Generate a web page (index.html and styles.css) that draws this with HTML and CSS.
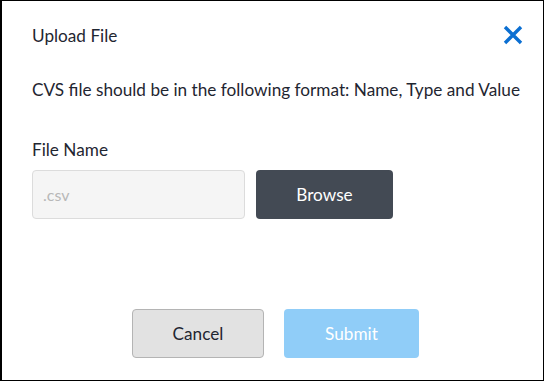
FILE: index.html
```html
<!DOCTYPE html>
<html>
<head>
<meta charset="utf-8">
<link rel="stylesheet" href="styles.css">
</head>
<body>
<div class="dialog">
  <div class="header">
    <h1 class="title">Upload File</h1>
    <button class="close" aria-label="Close">
      <svg width="20" height="20" viewBox="0 0 20 20"><path d="M2 2 L18 18 M18 2 L2 18" stroke="#0b6fd2" stroke-width="3.4" stroke-linecap="butt"/></svg>
    </button>
  </div>
  <p class="desc">CVS file should be in the following format: Name, Type and Value</p>
  <label class="label">File Name</label>
  <div class="row">
    <input class="input" type="text" placeholder=".csv" disabled>
    <button class="btn browse">Browse</button>
  </div>
  <div class="actions">
    <button class="btn cancel">Cancel</button>
    <button class="btn submit">Submit</button>
  </div>
</div>
</body>
</html>
```
FILE: styles.css
```css
html, body { margin: 0; padding: 0; background: #fff; }
body { font-family: Lato, "Noto Sans", sans-serif; color: #1f2631; }
.dialog {
  box-sizing: border-box;
  width: 544px;
  height: 381px;
  border: 1px solid #000;
  border-left-width: 2px;
  padding: 23px 20px 0 30px;
  display: flex;
  flex-direction: column;
}
.header { display: flex; justify-content: space-between; align-items: center; height: 22px; }
.title { font-size: 17.2px; font-weight: 400; margin: 0; }
.close { background: none; border: 0; padding: 0; width: 20px; height: 20px; display: flex; margin-right: 0; }
.desc { font-size: 17.2px; margin: 33px 0 0; line-height: 22px; }
.label { font-size: 17.2px; margin-top: 38px; line-height: 22px; }
.row { display: flex; gap: 11px; margin-top: 9px; }
.input {
  box-sizing: border-box;
  width: 213px; height: 49px;
  background: #f5f5f5;
  border: 1px solid #dcdcdc;
  border-radius: 4px;
  padding: 0 10px;
  font-family: inherit; font-size: 16px;
}
.input::placeholder { color: #b8b8b8; }
.btn {
  box-sizing: border-box;
  height: 49px;
  border-radius: 4px;
  font-family: inherit; font-size: 17.2px;
  border: 1px solid transparent;
}
.browse { width: 137px; background: #434a54; color: #fff; }
.actions { display: flex; justify-content: flex-start; gap: 20px; margin-top: 90px; margin-left: 100px; }
.cancel { width: 132px; background: #e2e2e2; border-color: #b4b4b4; color: #1f2631; }
.submit { width: 135px; background: #90cdf8; color: #fff; }
```
